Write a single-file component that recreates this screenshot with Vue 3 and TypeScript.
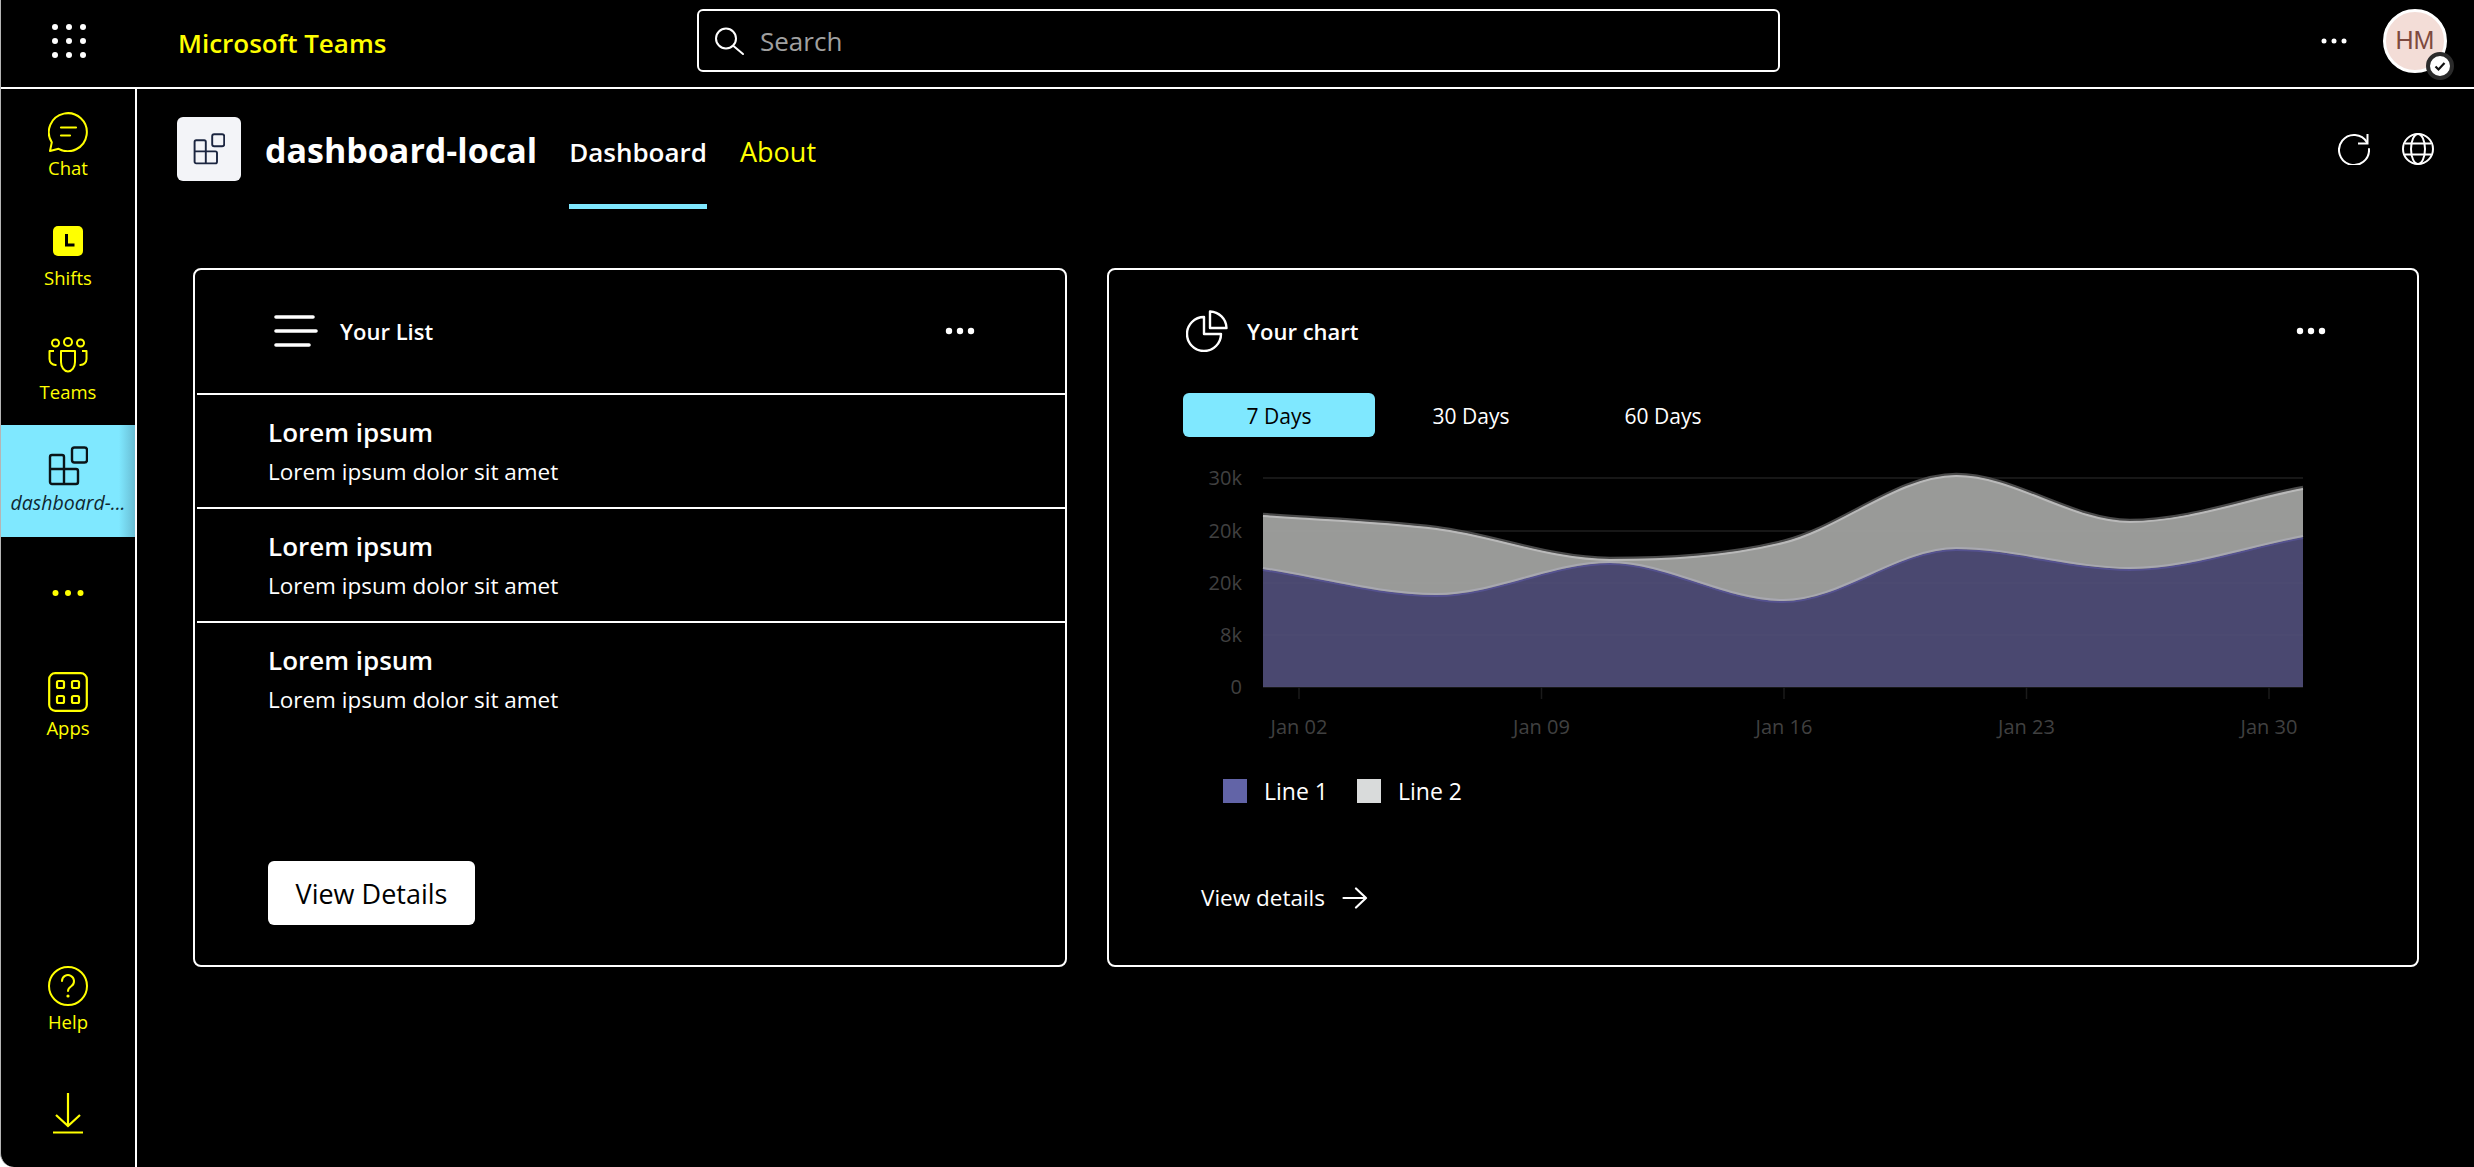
<script setup lang="ts">
import { computed } from "vue";

const rows = [1, 2, 3];
const tabs = ["7 Days", "30 Days", "60 Days"];

const xs = [1263, 1436.3, 1609.7, 1783, 1956.3, 2129.7, 2303].map((x) => x - 1263);
const baseline = 209;
const upper = [515, 528, 559, 542, 475, 521, 488].map((y) => y - 478);
const lower = [569, 595, 563, 601, 549, 569, 537].map((y) => y - 478);

const gridY = [0, 53, 105, 157, 209];
const yLabels = ["30k", "20k", "20k", "8k", "0"];
const xTicks = [
    { x: 36, label: "Jan 02" },
    { x: 278.5, label: "Jan 09" },
    { x: 521, label: "Jan 16" },
    { x: 763.5, label: "Jan 23" },
    { x: 1006, label: "Jan 30" },
];

// monotone tangents, same idea as d3's curveMonotoneX
function tangents(ys: number[]): number[] {
    return ys.map((y, i) => {
        if (i === 0) return (ys[1] - y) / (xs[1] - xs[0]);
        if (i === ys.length - 1) return (y - ys[i - 1]) / (xs[i] - xs[i - 1]);
        const s0 = (y - ys[i - 1]) / (xs[i] - xs[i - 1]);
        const s1 = (ys[i + 1] - y) / (xs[i + 1] - xs[i]);
        if (s0 * s1 <= 0) return 0;
        const limit = 3 * Math.min(Math.abs(s0), Math.abs(s1));
        return Math.sign(s0) * Math.min(limit, Math.abs(s0 + s1) / 2);
    });
}

function curve(ys: number[]): string {
    const m = tangents(ys);
    let d = `M${xs[0]},${ys[0]}`;
    for (let i = 1; i < ys.length; i++) {
        const h = (xs[i] - xs[i - 1]) / 3;
        d += ` C${xs[i - 1] + h},${ys[i - 1] + m[i - 1] * h} ${xs[i] - h},${ys[i] - m[i] * h} ${xs[i]},${ys[i]}`;
    }
    return d;
}

const upperLine = computed(() => curve(upper));
const lowerLine = computed(() => curve(lower));
const lowerArea = computed(() => `${lowerLine.value} L1040,${baseline} L0,${baseline} Z`);
// top band: along the upper line, then back along the lower one
const upperArea = computed(() => {
    const m = tangents(lower);
    let back = "";
    for (let i = lower.length - 1; i > 0; i--) {
        const h = (xs[i] - xs[i - 1]) / 3;
        back += ` C${xs[i] - h},${lower[i] - m[i] * h} ${xs[i - 1] + h},${lower[i - 1] + m[i - 1] * h} ${xs[i - 1]},${lower[i - 1]}`;
    }
    return `${upperLine.value} L1040,${lower[6]}${back} Z`;
});
</script>

<template>
    <div class="shell">
        <header class="topbar">
            <button class="waffle" aria-label="Apps">
                <svg width="34" height="34" viewBox="0 0 34 34" fill="#fff">
                    <circle v-for="n in 9" :key="n" :cx="3 + ((n - 1) % 3) * 14" :cy="3 + Math.floor((n - 1) / 3) * 14" r="3" />
                </svg>
            </button>
            <div class="brand">Microsoft Teams</div>
            <div class="search">
                <svg width="32" height="32" viewBox="0 0 32 32" fill="none" stroke="#fff" stroke-width="2" stroke-linecap="round">
                    <circle cx="11" cy="13.5" r="10" />
                    <path d="M18.5 21l9.5 8" />
                </svg>
                <span>Search</span>
            </div>
            <div class="top-right">
                <svg width="26" height="6" viewBox="0 0 26 6" fill="#fff">
                    <circle cx="3" cy="3" r="2.5" />
                    <circle cx="13" cy="3" r="2.5" />
                    <circle cx="23" cy="3" r="2.5" />
                </svg>
                <div class="avatar">
                    HM
                    <span class="presence">
                        <svg width="14" height="14" viewBox="0 0 14 14" fill="none" stroke="#111" stroke-width="2.2">
                            <path d="M2.5 7.5l3 3 6-6.5" />
                        </svg>
                    </span>
                </div>
            </div>
        </header>

        <div class="body">
            <nav class="rail">
                <a class="rail-item item-chat">
                    <svg width="40" height="40" viewBox="0 0 40 40" fill="none" stroke="currentColor" stroke-width="2">
                        <path d="M2 39l1.8-8.6A19 19 0 1 1 10.6 36.8z" stroke-linejoin="round" />
                        <path d="M13 15.5h15M13 23.5h9" stroke-linecap="round" stroke-width="2.2" />
                    </svg>
                    <span>Chat</span>
                </a>
                <a class="rail-item item-shifts">
                    <svg width="30" height="30" viewBox="0 0 30 30">
                        <rect width="30" height="30" rx="5" fill="#ff0" />
                        <path d="M13.5 8v11h8" fill="none" stroke="#000" stroke-width="3" />
                    </svg>
                    <span>Shifts</span>
                </a>
                <a class="rail-item item-teams">
                    <svg width="40" height="36" viewBox="0 0 40 36" fill="none" stroke="currentColor" stroke-width="2">
                        <circle cx="7.5" cy="6" r="3.5" />
                        <circle cx="20" cy="5" r="4" />
                        <circle cx="32.5" cy="6" r="3.5" />
                        <path d="M13 14h14v11a7 9.5 0 0 1-14 0z" stroke-linejoin="round" />
                        <path d="M6 14H1.5v8a6 6 0 0 0 6 6h1" stroke-linejoin="round" />
                        <path d="M34 14h4.5v8a6 6 0 0 1-6 6h-1" stroke-linejoin="round" />
                    </svg>
                    <span>Teams</span>
                </a>
                <a class="rail-item active">
                    <svg width="40" height="40" viewBox="0 0 40 40" fill="none" stroke="#0a1418" stroke-width="2.4">
                        <path d="M2 11a2 2 0 0 1 2-2h10a2 2 0 0 1 2 2v12h12a2 2 0 0 1 2 2v11a2 2 0 0 1-2 2H4a2 2 0 0 1-2-2zM2 23h14v15" stroke-linejoin="round" />
                        <rect x="24" y="1.5" width="15" height="15" rx="2.5" />
                    </svg>
                    <span>dashboard-...</span>
                </a>
                <a class="rail-item item-more">
                    <svg width="32" height="8" viewBox="0 0 32 8" fill="currentColor">
                        <circle cx="3.5" cy="4" r="3" />
                        <circle cx="16" cy="4" r="3" />
                        <circle cx="28.5" cy="4" r="3" />
                    </svg>
                </a>
                <a class="rail-item item-apps">
                    <svg width="40" height="40" viewBox="0 0 40 40" fill="none" stroke="currentColor" stroke-width="2.2">
                        <rect x="1.2" y="1.2" width="37.6" height="37.6" rx="6" />
                        <rect x="9" y="9" width="7" height="7" rx="1.5" />
                        <rect x="24" y="9" width="7" height="7" rx="1.5" />
                        <rect x="9" y="24" width="7" height="7" rx="1.5" />
                        <rect x="24" y="24" width="7" height="7" rx="1.5" />
                    </svg>
                    <span>Apps</span>
                </a>
                <div class="rail-spacer"></div>
                <a class="rail-item item-help">
                    <svg width="40" height="40" viewBox="0 0 40 40" fill="none" stroke="currentColor" stroke-width="2">
                        <circle cx="20" cy="20" r="19" />
                        <path d="M14 15a6 6 0 1 1 9.5 5c-2 1.4-3.5 2.5-3.5 5" stroke-linecap="round" />
                        <circle cx="20" cy="30" r="1.6" fill="currentColor" stroke="none" />
                    </svg>
                    <span>Help</span>
                </a>
                <a class="rail-item item-download">
                    <svg width="30" height="41" viewBox="0 0 30 41" fill="none" stroke="currentColor" stroke-width="2.2">
                        <path d="M15 0v33M3 22l12 11 12-11" />
                        <path d="M0 39.5h30" />
                    </svg>
                </a>
            </nav>

            <main class="main">
                <div class="app-header">
                    <div class="app-tile">
                        <svg width="32" height="32" viewBox="0 0 40 40" fill="none" stroke="#1b2540" stroke-width="2.4">
                            <path d="M2 11a2 2 0 0 1 2-2h10a2 2 0 0 1 2 2v12h12a2 2 0 0 1 2 2v11a2 2 0 0 1-2 2H4a2 2 0 0 1-2-2zM2 23h14v15" stroke-linejoin="round" />
                            <rect x="24" y="1.5" width="15" height="15" rx="2.5" />
                        </svg>
                    </div>
                    <h1 class="app-title">dashboard-local</h1>
                    <div class="app-tabs">
                        <a class="app-tab current">Dashboard</a>
                        <a class="app-tab">About</a>
                    </div>
                    <div class="app-actions">
                        <svg width="32" height="32" viewBox="0 0 32 32" fill="none" stroke="#fff" stroke-width="2">
                            <path d="M29 9.5A15 15 0 1 0 31 16" stroke-linecap="round" />
                            <path d="M29.5 1v9.5H20" />
                        </svg>
                        <svg width="32" height="32" viewBox="0 0 32 32" fill="none" stroke="#fff" stroke-width="2">
                            <circle cx="16" cy="16" r="15" />
                            <ellipse cx="16" cy="16" rx="7" ry="15" />
                            <path d="M3 10.5h26M3 21.5h26" />
                        </svg>
                    </div>
                </div>

                <div class="cards">
                    <section class="card list-card">
                        <div class="list-head">
                            <svg width="44" height="32" viewBox="0 0 44 32" fill="none" stroke="#fff" stroke-width="3.6" stroke-linecap="round">
                                <path d="M2 2h37M2 16h40M2 30h33" />
                            </svg>
                            <span class="card-title">Your List</span>
                            <svg class="card-dots" width="30" height="8" viewBox="0 0 30 8" fill="#fff">
                                <circle cx="4" cy="4" r="3.2" />
                                <circle cx="15" cy="4" r="3.2" />
                                <circle cx="26" cy="4" r="3.2" />
                            </svg>
                        </div>
                        <div v-for="row in rows" :key="row" class="list-row">
                            <div class="row-title">Lorem ipsum</div>
                            <div class="row-text">Lorem ipsum dolor sit amet</div>
                        </div>
                        <div class="list-foot">
                            <button class="details-btn">View Details</button>
                        </div>
                    </section>

                    <section class="card chart-card">
                        <div class="chart-head">
                            <svg width="42" height="42" viewBox="0 0 42 42" fill="none" stroke="#fff" stroke-width="2.4" stroke-linejoin="round">
                                <path d="M18 7A17 17 0 1 0 35 24H18z" />
                                <path d="M24 1.5A17 17 0 0 1 40.5 18H24z" />
                            </svg>
                            <span class="card-title">Your chart</span>
                            <svg class="card-dots" width="30" height="8" viewBox="0 0 30 8" fill="#fff">
                                <circle cx="4" cy="4" r="3.2" />
                                <circle cx="15" cy="4" r="3.2" />
                                <circle cx="26" cy="4" r="3.2" />
                            </svg>
                        </div>
                        <div class="range-tabs">
                            <button v-for="(tab, i) in tabs" :key="tab" class="range-tab" :class="{ selected: i === 0 }">{{ tab }}</button>
                        </div>
                        <svg class="chart" width="1120" height="293" viewBox="-72 -20 1120 293">
                            <line v-for="y in gridY" :key="y" x1="0" x2="1040" :y1="y" :y2="y" stroke="#151515" stroke-width="2" />
                            <path :d="lowerArea" fill="#4a4870" />
                            <path :d="lowerLine" fill="none" stroke="#55528f" stroke-width="2" transform="translate(0 1)" />
                            <path :d="upperArea" fill="#999a98" />
                            <path :d="lowerLine" fill="none" stroke="#a8a8b0" stroke-width="2" transform="translate(0 -1)" />
                            <path :d="upperLine" fill="none" stroke="#4a4a4a" stroke-width="2.5" transform="translate(0 -1)" />
                            <path :d="upperLine" fill="none" stroke="#b9b9b9" stroke-width="2" transform="translate(0 1)" />
                            <line v-for="y in gridY" :key="`over-${y}`" x1="0" x2="1040" :y1="y" :y2="y" stroke="rgba(255,255,255,0.012)" stroke-width="2" />
                            <line v-for="t in xTicks" :key="t.x" :x1="t.x" :x2="t.x" :y1="baseline" y2="221" stroke="#1a1a1a" stroke-width="1.5" />
                            <text v-for="(label, i) in yLabels" :key="i" class="axis" x="-21" :y="gridY[i] + 7" text-anchor="end">{{ label }}</text>
                            <text v-for="t in xTicks" :key="t.label" class="axis" :x="t.x" y="256" text-anchor="middle">{{ t.label }}</text>
                        </svg>
                        <div class="legend">
                            <span class="swatch swatch-one"></span>
                            <span class="legend-label">Line 1</span>
                            <span class="swatch swatch-two"></span>
                            <span class="legend-label">Line 2</span>
                        </div>
                        <a class="view-link">
                            View details
                            <svg width="26" height="22" viewBox="0 0 26 22" fill="none" stroke="#fff" stroke-width="2.2" stroke-linecap="round" stroke-linejoin="round">
                                <path d="M1.5 11h22M14 1.5l10 9.5-10 9.5" />
                            </svg>
                        </a>
                    </section>
                </div>
            </main>
        </div>
    </div>
</template>

<style>
html,
body {
    margin: 0;
    background: #fff;
}
</style>

<style scoped>
.shell {
    width: 2474px;
    height: 1167px;
    box-sizing: border-box;
    display: flex;
    flex-direction: column;
    overflow: hidden;
    background: #000;
    color: #fff;
    border-left: 1px solid #b5b5b5;
    border-bottom-left-radius: 14px;
    font-family: "Open Sans", "Noto Sans", sans-serif;
}

.topbar {
    flex: none;
    box-sizing: content-box;
    height: 81px;
    padding-bottom: 6px;
    display: flex;
    align-items: center;
    border-bottom: 2px solid #fff;
}

.waffle {
    border: none;
    background: none;
    padding: 0;
    margin-left: 51px;
    width: 34px;
    height: 34px;
}

.brand {
    margin: 4px 0 0 92px;
    width: 519px;
    color: #ff0;
    font-size: 26px;
    font-weight: 600;
}

.search {
    box-sizing: border-box;
    width: 1083px;
    height: 63px;
    display: flex;
    align-items: center;
    gap: 13px;
    padding-left: 16px;
    border: 2px solid #fff;
    border-radius: 6px;
    color: #a0a0a0;
    font-size: 26px;
}

.top-right {
    flex: 1;
    display: flex;
    align-items: center;
    justify-content: flex-end;
    gap: 36px;
    padding-right: 27px;
}

.avatar {
    position: relative;
    box-sizing: border-box;
    width: 64px;
    height: 64px;
    display: flex;
    align-items: center;
    justify-content: center;
    border-radius: 50%;
    border: 3px solid #fff;
    background: #f3ddd7;
    color: #7e4a3f;
    font-size: 25px;
    font-family: "Liberation Sans", sans-serif;
}

.presence {
    position: absolute;
    right: -10px;
    bottom: -10px;
    box-sizing: border-box;
    width: 28px;
    height: 28px;
    display: flex;
    align-items: center;
    justify-content: center;
    border: 4px solid #2b2b2b;
    border-radius: 50%;
    background: #fff;
}

.body {
    flex: 1;
    min-height: 0;
    display: flex;
}

.rail {
    flex: none;
    width: 134px;
    display: flex;
    flex-direction: column;
    border-right: 2px solid #fff;
    color: #ff0;
}

.rail-item {
    display: flex;
    flex-direction: column;
    align-items: center;
    flex: none;
    font-size: 18.5px;
    line-height: 22px;
}

.rail-item span {
    margin-top: 5px;
}

.item-chat {
    padding-top: 23px;
}

.item-shifts {
    padding-top: 47px;
}

.item-shifts span {
    margin-top: 11px;
}

.item-teams {
    padding-top: 48px;
}

.item-teams span {
    margin-top: 8px;
}

.active {
    box-sizing: border-box;
    height: 112px;
    margin-top: 22px;
    padding-top: 21px;
    background: linear-gradient(to right, #7fe8ff 88%, #69bdd4);
    color: #0f2730;
    font-style: italic;
    font-size: 19.5px;
}

.active span {
    margin-top: 6px;
}

.item-more {
    padding-top: 52px;
}

.item-apps {
    padding-top: 75px;
}

.rail-spacer {
    flex: 1;
}

.item-help {
    padding-bottom: 60px;
}

.item-download {
    padding-bottom: 33px;
}

.main {
    flex: 1;
    min-width: 0;
}

.app-header {
    height: 119px;
    display: flex;
    align-items: flex-start;
    padding: 0 40px;
}

.app-tile {
    flex: none;
    width: 64px;
    height: 64px;
    margin-top: 28px;
    display: flex;
    align-items: center;
    justify-content: center;
    background: #f3f4f8;
    border-radius: 6px;
}

.app-title {
    margin: 39px 0 0 24px;
    font-size: 34px;
    line-height: 44px;
    font-weight: 700;
}

.app-tabs {
    display: flex;
    gap: 33px;
    margin-left: 32px;
}

.app-tab {
    padding-top: 45px;
    height: 70px;
    font-size: 27px;
    line-height: 36px;
    color: #ff0;
}

.current {
    color: #fff;
    font-size: 26px;
    font-weight: 600;
    border-bottom: 5px solid #7fe8ff;
}

.app-actions {
    margin-left: auto;
    display: flex;
    gap: 32px;
    padding-top: 44px;
}

.cards {
    display: grid;
    grid-template-columns: 874px 1312px;
    gap: 40px;
    height: 699px;
    margin: 60px 0 0 56px;
}

.card {
    box-sizing: border-box;
    min-height: 0;
    border: 2px solid #fff;
    border-radius: 8px;
    display: flex;
    flex-direction: column;
}

.card-title {
    font-size: 22px;
    font-weight: 600;
}

.card-dots {
    margin-left: auto;
}

.list-head {
    height: 123px;
    flex: none;
    box-sizing: border-box;
    display: flex;
    align-items: center;
    gap: 22px;
    padding: 0 90px 2px 79px;
}

.list-row {
    flex: none;
    height: 114px;
    box-sizing: border-box;
    margin: 0 0 0 2px;
    padding: 19px 0 0 71px;
    border-top: 2px solid #fff;
}

.row-title {
    font-size: 26px;
    line-height: 36px;
    font-weight: 600;
}

.row-text {
    font-size: 22.5px;
    line-height: 30px;
    margin-top: 7px;
}

.list-foot {
    margin-top: auto;
    padding: 0 0 40px 73px;
}

.details-btn {
    width: 207px;
    height: 64px;
    border: none;
    border-radius: 6px;
    background: #fff;
    color: #000;
    font-family: inherit;
    font-size: 27px;
    font-weight: 500;
}

.chart-head {
    height: 80px;
    margin-top: 21px;
    display: flex;
    align-items: center;
    gap: 19px;
    padding: 0 91px 0 77px;
}

.range-tabs {
    display: flex;
    margin: 22px 0 0 74px;
}

.range-tab {
    width: 192px;
    height: 44px;
    padding: 2px 0 0;
    border: none;
    border-radius: 6px;
    background: none;
    color: #fff;
    font-family: inherit;
    font-size: 21px;
}

.selected {
    background: #7fe8ff;
    color: #000;
}

.chart {
    display: block;
    margin: 21px 0 0 82px;
}

.axis {
    fill: #404040;
    font-size: 20px;
    font-family: "Open Sans", sans-serif;
}

.legend {
    display: flex;
    align-items: center;
    margin: 25px 0 0 114px;
    font-size: 23px;
    line-height: 30px;
}

.swatch {
    width: 24px;
    height: 24px;
}

.swatch-one {
    background: #6264a7;
}

.swatch-two {
    margin-left: 29px;
    background: #d9dbdb;
}

.legend-label {
    margin-left: 17px;
}

.view-link {
    display: flex;
    align-items: center;
    gap: 17px;
    margin: 77px 0 0 92px;
    font-size: 22.5px;
    line-height: 30px;
}
</style>
